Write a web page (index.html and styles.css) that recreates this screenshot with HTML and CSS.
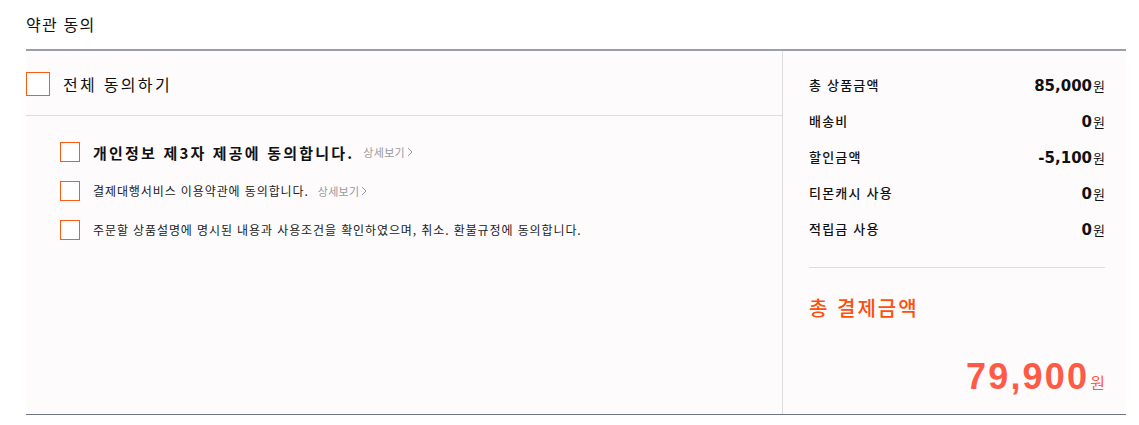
FILE: index.html
```html
<!DOCTYPE html>
<html lang="ko">
<head>
<meta charset="utf-8">
<link rel="stylesheet" href="styles.css">
</head>
<body>
<div class="wrap">
  <h2 class="title">약관 동의</h2>
  <div class="box">
    <div class="terms">
      <div class="all-row">
        <span class="chk chk-lg"></span>
        <span class="all-label">전체 동의하기</span>
      </div>
      <ul class="items">
        <li class="item">
          <span class="chk"></span>
          <span class="item-strong">개인정보 제3자 제공에 동의합니다.</span>
          <a class="more">상세보기<svg class="arr" width="6" height="10" viewBox="0 0 6 10"><path d="M1 1l4 4-4 4" fill="none" stroke="#999" stroke-width="1"/></svg></a>
        </li>
        <li class="item">
          <span class="chk"></span>
          <span class="item-text">결제대행서비스 이용약관에 동의합니다.</span>
          <a class="more">상세보기<svg class="arr" width="6" height="10" viewBox="0 0 6 10"><path d="M1 1l4 4-4 4" fill="none" stroke="#999" stroke-width="1"/></svg></a>
        </li>
        <li class="item">
          <span class="chk"></span>
          <span class="item-text">주문할 상품설명에 명시된 내용과 사용조건을 확인하였으며, 취소. 환불규정에 동의합니다.</span>
        </li>
      </ul>
    </div>
    <div class="summary">
      <div class="rows">
        <div class="row"><span class="lbl">총 상품금액</span><span class="val"><b>85,000</b><i>원</i></span></div>
        <div class="row"><span class="lbl">배송비</span><span class="val"><b>0</b><i>원</i></span></div>
        <div class="row"><span class="lbl">할인금액</span><span class="val"><b>-5,100</b><i>원</i></span></div>
        <div class="row"><span class="lbl">티몬캐시 사용</span><span class="val"><b>0</b><i>원</i></span></div>
        <div class="row"><span class="lbl">적립금 사용</span><span class="val"><b>0</b><i>원</i></span></div>
      </div>
      <div class="total-label">총 결제금액</div>
      <div class="total"><b>79,900</b><i>원</i></div>
    </div>
  </div>
</div>
</body>
</html>
```
FILE: styles.css
```css
* { box-sizing: border-box; }
body {
  margin: 0;
  background: #fff;
  font-family: "Noto Sans CJK KR", "Noto Sans", sans-serif;
  color: #111;
}
.wrap {
  width: 1100px;
  margin-left: 26px;
}
.title {
  margin: 0;
  height: 49px;
  display: flex;
  align-items: center;
  font-size: 16px;
  font-weight: 400;
  letter-spacing: 1.2px;
  line-height: 1;
  padding-bottom: 1px;
}
.box {
  display: flex;
  border-top: 2px solid #9ba0a8;
  border-bottom: 1px solid #6e7580;
  background: #fdfbfc;
  height: 366px;
}
.terms {
  width: 757px;
  border-right: 1px solid #dcdcdc;
}
.all-row {
  display: flex;
  align-items: center;
  height: 65px;
  padding-top: 2px;
  border-bottom: 1px solid #dcdcdc;
}
.chk {
  display: inline-block;
  flex: none;
  width: 20px;
  height: 20px;
  border: 1px solid #ff5a14;
  background: #fff;
}
.chk-lg {
  width: 24px;
  height: 24px;
}
.all-label {
  margin-left: 13px;
  font-size: 16px;
  letter-spacing: 2.3px;
  line-height: 1;
}
.items {
  list-style: none;
  margin: 0;
  padding: 26px 0 0 34px;
  display: flex;
  flex-direction: column;
  gap: 19px;
}
.item {
  display: flex;
  align-items: center;
  height: 20px;
}
.item-strong {
  margin-left: 13px;
  font-size: 15px;
  font-weight: 700;
  letter-spacing: 2.2px;
  line-height: 1;
}
.item-text {
  margin-left: 13px;
  font-size: 12px;
  letter-spacing: 0.9px;
  line-height: 1;
  color: #222;
}
.more {
  display: inline-flex;
  align-items: center;
  gap: 2px;
  margin-left: 9px;
  font-size: 11px;
  letter-spacing: 0.3px;
  color: #999;
  line-height: 1;
}
.summary {
  flex: 1;
  padding: 15px 21px 0 26px;
  display: flex;
  flex-direction: column;
}
.rows {
  border-bottom: 1px solid #dcdcdc;
  padding-bottom: 21px;
}
.row {
  height: 36px;
  display: flex;
  align-items: center;
  justify-content: space-between;
}
.lbl {
  font-size: 13px;
  font-weight: 500;
  letter-spacing: 1.2px;
  color: #111;
}
.val b {
  font-family: "DejaVu Sans", sans-serif;
  font-size: 15px;
  font-weight: 700;
}
.val i {
  font-style: normal;
  font-size: 13px;
  margin-left: 1px;
}
.total-label {
  margin-top: 30px;
  font-size: 20px;
  font-weight: 500;
  letter-spacing: 2px;
  color: #ff4f0a;
  line-height: 1;
}
.total {
  margin-top: 41px;
  text-align: right;
  color: #ff5a46;
  line-height: 1;
}
.total b {
  font-family: "Liberation Sans", sans-serif;
  font-size: 36px;
  font-weight: 700;
  letter-spacing: 2.2px;
}
.total i {
  font-style: normal;
  font-size: 16px;
  margin-left: 1px;
}
```
